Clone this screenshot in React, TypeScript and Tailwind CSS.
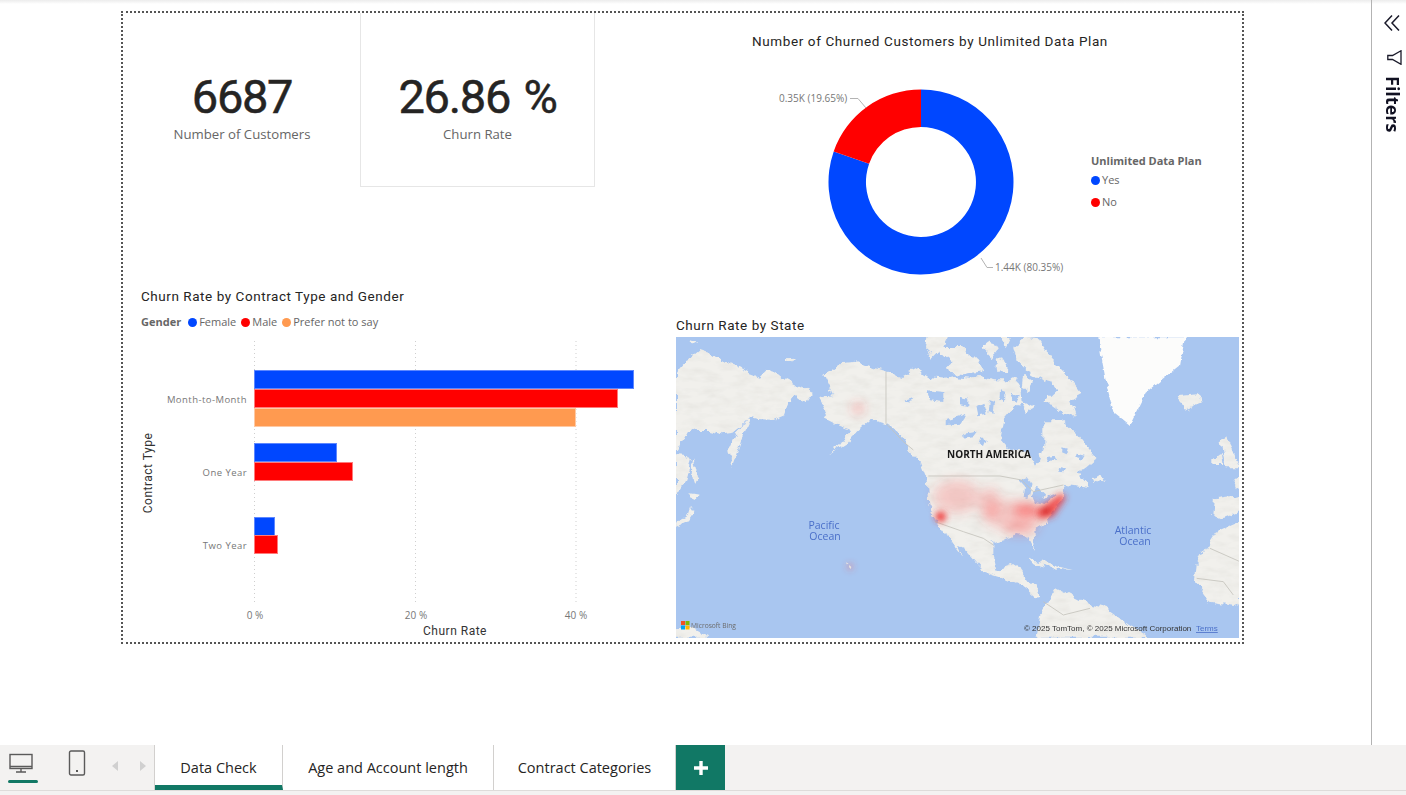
import React from "react";

const din = "font-['Roboto',sans-serif]";
const seg = "font-['Open_Sans',sans-serif]";

function Kpi({ value, label, boxed }: { value: string; label: string; boxed?: boolean }) {
  return (
    <div className={`flex h-[174px] flex-col items-center pt-[57px] ${boxed ? "w-[235px] border-x border-b border-[#e6e6e6]" : "w-[236px]"}`}>
      <div className={`${din} text-[47px] leading-[54px] tracking-[-1.3px] text-[#252423] [-webkit-text-stroke:0.5px_#252423] [word-spacing:3px]`}>{value}</div>
      <div className={`${seg} text-[13.2px] leading-[20px] text-[#666666]`}>{label}</div>
    </div>
  );
}

function Dot({ color }: { color: string }) {
  return <span className={`inline-block h-[9px] w-[9px] rounded-full ${color}`} />;
}

function BarChart() {
  const bars: [number, number, number, string, string][] = [
    [254, 370, 634, "#0047ff", "#5d87ff"],
    [254, 389, 618, "#ff0000", "#ff7a7a"],
    [254, 408, 576, "#ff9a50", "#ffc9a3"],
    [254, 443, 337, "#0047ff", "#5d87ff"],
    [254, 462, 353, "#ff0000", "#ff7a7a"],
    [254, 517, 275, "#0047ff", "#5d87ff"],
    [254, 535, 278, "#ff0000", "#ff7a7a"],
  ];
  return (
    <svg viewBox="124 335 544 305" className="h-[305px] w-[544px]">
      {[254.5, 415.5, 576].map((x) => (
        <line key={x} x1={x} x2={x} y1={341} y2={605} stroke="#cfcfcf" strokeWidth="1" strokeDasharray="1 3" />
      ))}
      {bars.map(([x, y, x2, c, b]) => (
        <rect key={`${x}${y}`} x={x + 0.5} y={y + 0.5} width={x2 - x - 1} height={18} fill={c} stroke={b} strokeWidth="1" />
      ))}
      <g fontFamily="Open Sans, sans-serif" fontSize="9.5" letterSpacing="0.45" fill="#777777" textAnchor="end">
        <text x="247" y="403">Month-to-Month</text>
        <text x="247" y="476">One Year</text>
        <text x="247" y="549">Two Year</text>
      </g>
      <g fontFamily="Open Sans, sans-serif" fontSize="10" fill="#777777" textAnchor="middle">
        <text x="255" y="619">0 %</text>
        <text x="416" y="619">20 %</text>
        <text x="576" y="619">40 %</text>
      </g>
      <text x="455" y="635" fontFamily="Roboto, sans-serif" fontSize="12" letterSpacing="0.5" fill="#333333" textAnchor="middle">Churn Rate</text>
      <text transform="translate(152 473) rotate(-90)" fontFamily="Roboto, sans-serif" fontSize="12" letterSpacing="0.5" fill="#333333" textAnchor="middle">Contract Type</text>
    </svg>
  );
}

function Donut() {
  return (
    <svg viewBox="668 60 400 225" className="h-[225px] w-[400px] shrink-0">
      <path d="M921 89.5 A92.5 92.5 0 1 1 833.7 151.4 L869.1 163.7 A55 55 0 1 0 921 127 Z" fill="#0047ff" />
      <path d="M921 89.5 A92.5 92.5 0 0 0 833.7 151.4 L869.1 163.7 A55 55 0 0 1 921 127 Z" fill="#ff0000" />
      <polyline points="850,98.5 858,98.5 866,108" fill="none" stroke="#b3b3b3" />
      <polyline points="993,267.5 987,267.5 981,258" fill="none" stroke="#b3b3b3" />
      <g fontFamily="Open Sans, sans-serif" fontSize="10" fill="#777777">
        <text x="779" y="102">0.35K (19.65%)</text>
        <text x="995" y="271">1.44K (80.35%)</text>
      </g>
    </svg>
  );
}

/* coastline pieces in a 3x space: (screen - (670,315)) * 3 */
const land = [
  "M18,170 L40,145 60,130 90,105 120,115 135,130 165,140 205,155 240,175 270,185 290,165 320,175 345,195 385,215 428,235 405,265 385,250 370,235 352,280 345,300 310,315 265,312 240,305 210,335 190,350 155,355 120,345 80,345 50,355 30,395 18,412 Z",
  "M240,305 L232,335 215,370 200,415 185,455 175,410 190,375 205,345 Z",
  "M18,418 L50,420 65,440 50,490 18,540 Z",
  "M70,430 L85,490 72,510 65,470 Z",
  "M62,535 L92,540 72,555 60,550 Z",
  "M60,575 L70,590 50,620 18,635 20,620 50,605 Z",
  "M345,130 L375,128 365,142 345,140 Z",
  "M60,72 L85,80 70,90 Z",
  "M18,940 L60,935 120,968 18,968 Z",
  /* Alaska, Canada, USA, Mexico */
  "M460,180 L510,145 560,140 610,160 645,166 690,186 740,161 780,186 830,191 850,186 900,191 930,186 970,196 1010,196 1030,186 1050,216 1055,261 1030,281 1000,316 990,366 1025,406 1075,411 1100,456 1120,396 1120,316 1170,316 1220,356 1280,430 1245,460 1220,475 1260,520 1190,510 1185,540 1160,575 1130,620 1090,650 1095,705 1075,665 1040,660 970,680 970,720 980,765 1040,745 1080,800 1115,845 1100,850 1060,815 1000,790 940,770 880,700 860,690 880,730 850,690 795,610 775,570 770,490 750,440 715,400 680,350 650,330 600,315 560,350 530,385 470,422 510,390 540,345 500,330 460,310 470,290 448,250 490,240 Z",
  /* Arctic islands */
  "M815,96 L870,96 920,136 940,171 880,181 840,176 830,156 845,141 815,116 Z",
  "M770,66 L835,66 820,96 785,131 765,96 Z",
  "M935,96 L960,76 980,106 965,126 Z",
  "M980,126 L1005,136 1015,166 985,171 Z",
  "M990,66 L1025,66 1010,96 Z",
  "M1030,96 L1060,71 1110,76 1150,136 1190,176 1235,236 1200,256 1215,301 1190,301 1145,266 1120,261 1160,226 1120,196 1070,166 1040,136 Z",
  "M1060,176 L1090,196 1070,231 1055,216 Z",
  "M1050,256 L1090,276 1070,291 Z",
  /* Newfoundland, Cuba, South America, Iceland, UK, Europe, Africa */
  "M1265,490 L1295,480 1305,505 1270,500 Z",
  "M1075,728 L1130,745 1205,765 1150,760 1090,745 Z",
  "M1100,968 L1110,900 1160,820 1240,860 1310,880 1380,930 1440,968 Z",
  "M1525,240 L1590,235 1595,265 1545,285 Z",
  "M1630,430 L1655,410 1660,450 1630,450 Z",
  "M1665,360 L1685,400 1710,460 1670,460 1655,380 Z",
  "M1710,480 L1690,490 1710,540 1635,550 1630,600 1655,612 1710,590 Z",
  "M1710,620 L1640,650 1580,740 1575,800 1620,860 1690,870 1710,860 Z",
];

const lakes = [
  "M770,226 l50,5 l0,30 l-40,-5 z",
  "M830,316 l60,-20 l-20,30 l-40,5 z",
  "M870,246 l25,5 l0,25 l-25,-5 z",
  "M920,276 l20,-10 l10,30 l-25,5 z",
  "M960,256 l15,5 l-5,35 l-14,-5 z",
  "M990,226 l14,5 l-2,30 l-14,-6 z",
  "M1025,236 l24,8 l-6,20 l-20,-10 z",
  "M880,356 l40,-6 l-10,14 l-30,4 z",
  "M930,366 l20,10 l-8,20 l-16,-10 z",
  "M1130,196 l16,4 l-4,18 l-14,-4 z",
  "M1175,396 l18,6 l-6,16 l-14,-6 z",
  "M1130,426 l24,-4 l4,12 l-24,4 z",
  "M1220,416 l24,6 l-8,12 l-20,-6 z",
  "M1170,456 l18,4 l-4,12 l-16,-2 z",
  "M700,256 l30,-10 l-6,14 z",
  "M1045,495 l25,-8 l15,20 l-10,45 l-14,-5 l4,-30 z",
  "M1085,540 l15,-25 l25,20 l-5,15 l30,-15 l10,5 l-40,30 l-25,-6 z",
];

function MapView() {
  return (
    <div className="h-[301px] w-[563px] overflow-hidden bg-[#a9c6f0]">
      <svg viewBox="676 337 563 301" className="block h-[301px] w-[563px]">
        <defs>
          <filter id="coast" x="-2%" y="-2%" width="104%" height="104%">
            <feTurbulence type="fractalNoise" baseFrequency="0.035" numOctaves="4" seed="4" result="n" />
            <feDisplacementMap in="SourceGraphic" in2="n" scale="26" xChannelSelector="R" yChannelSelector="G" result="d" />
            <feGaussianBlur in="d" stdDeviation="1.6" result="b" />
            <feTurbulence type="fractalNoise" baseFrequency="0.02 0.05" numOctaves="3" seed="9" />
            <feColorMatrix values="0 0 0 0 0.6  0 0 0 0 0.59  0 0 0 0 0.55  0.5 0 0 0 -0.2" result="t" />
            <feComposite in="t" in2="b" operator="in" result="tex" />
            <feMerge><feMergeNode in="b" /><feMergeNode in="tex" /></feMerge>
          </filter>
          <filter id="lake" x="-2%" y="-2%" width="104%" height="104%">
            <feTurbulence type="fractalNoise" baseFrequency="0.05" numOctaves="3" seed="7" result="n" />
            <feDisplacementMap in="SourceGraphic" in2="n" scale="16" xChannelSelector="R" yChannelSelector="G" result="d" />
            <feGaussianBlur in="d" stdDeviation="1.2" />
          </filter>
          <filter id="heat" x="-60%" y="-60%" width="220%" height="220%"><feGaussianBlur stdDeviation="16" /></filter>
          <filter id="heat2" x="-60%" y="-60%" width="220%" height="220%"><feGaussianBlur stdDeviation="9" /></filter>
        </defs>
        <g transform="translate(670 315) scale(0.33333)">
          <g filter="url(#coast)" fill="#f1f0ec">
            {land.map((d) => <path key={d} d={d} />)}
          </g>
          <path filter="url(#lake)" d="M1285,67 L1545,67 1530,150 1480,190 1430,230 1380,330 1330,290 1310,210 1295,130 Z" fill="#fcfcfb" />
          <g filter="url(#lake)" fill="#a9c6f0">
            {lakes.map((d) => <path key={d} d={d} />)}
          </g>
          <g fill="none" stroke="#c4c3bc" strokeWidth="2.5">
            <path d="M648,170 L648,325 700,380 730,405" />
            <path d="M775,483 L990,483 1055,495 1090,530 1180,510" />
            <path d="M795,620 L880,650 940,670 970,690" />
            <path d="M1120,860 L1180,900 1260,880 M1620,700 L1710,740 M1580,790 L1660,800 1690,840" />
          </g>
          <g filter="url(#heat)" fill="#ff4040">
            <ellipse cx="860" cy="545" rx="70" ry="50" opacity="0.22" />
            <ellipse cx="960" cy="565" rx="30" ry="45" opacity="0.28" />
            <ellipse cx="1030" cy="600" rx="90" ry="45" opacity="0.22" />
            <ellipse cx="1050" cy="640" rx="50" ry="18" opacity="0.3" />
            <ellipse cx="564" cy="280" rx="14" ry="12" opacity="0.55" />
            <ellipse cx="1070" cy="585" rx="40" ry="14" opacity="0.7" />
          </g>
          <g filter="url(#heat2)" fill="#f03030">
            <ellipse cx="812" cy="605" rx="16" ry="16" opacity="0.95" />
            <path d="M1095,590 L1170,535 1190,545 1150,605 1112,612 Z" opacity="0.8" />
            <ellipse cx="1128" cy="588" rx="14" ry="10" fill="#c82020" opacity="0.8" />
            <ellipse cx="540" cy="755" rx="9" ry="9" fill="#ff5050" opacity="0.45" />
          </g>
          <path d="M528,742 l8,4 l-6,2 z M538,750 l6,6 l-2,6 l-5,-6 z" fill="#e8e3e0" />
        </g>
        <g fontFamily="Open Sans, sans-serif" fill="#4a6fc9" fontSize="10.5" textAnchor="middle">
          <text x="824" y="529">Pacific</text>
          <text x="825" y="540">Ocean</text>
          <text x="1133" y="534">Atlantic</text>
          <text x="1135" y="545">Ocean</text>
        </g>
        <text x="989" y="458" fontFamily="Open Sans, sans-serif" fontSize="10" fontWeight="700" fill="#1a1a1a" textAnchor="middle">NORTH AMERICA</text>
        <g>
          <rect x="681" y="621" width="4" height="4" fill="#f25022" />
          <rect x="685.5" y="621" width="4" height="4" fill="#7fba00" />
          <rect x="681" y="625.5" width="4" height="4" fill="#00a4ef" />
          <rect x="685.5" y="625.5" width="4" height="4" fill="#ffb900" />
        </g>
        <text x="691" y="628" fontFamily="Open Sans, sans-serif" fontSize="6.7" fill="#6b6b6b">Microsoft Bing</text>
        <text x="1024" y="631" fontFamily="Liberation Sans, sans-serif" fontSize="8" fill="#333333">© 2025 TomTom, © 2025 Microsoft Corporation</text>
        <text x="1196" y="631" fontFamily="Liberation Sans, sans-serif" fontSize="8" fill="#4a6fc9" textDecoration="underline">Terms</text>
      </svg>
    </div>
  );
}

function Tab({ label, w, active }: { label: string; w: string; active?: boolean }) {
  return (
    <div className={`flex h-[45px] items-center justify-center border-r border-[#d2d0ce] bg-white ${w} ${seg} text-[14.5px] text-[#252423] ${active ? "border-b-[5px] border-b-[#117865] pt-[5px] font-medium" : ""}`}>
      {label}
    </div>
  );
}

export default function App() {
  return (
    <div className="flex h-[795px] w-[1406px] flex-col overflow-hidden bg-white">
      <div className="flex h-[745px]">
        <main className="w-[1371px] bg-gradient-to-b from-[#ececec] via-white via-[4px] to-white pl-[121px] pt-[11px]">
          <div className="flex h-[633px] w-[1123px] border-2 border-dotted border-[#555555]">
            <div className="w-[545px] shrink-0 pl-[1px]">
              <div className="flex">
                <Kpi value="6687" label="Number of Customers" />
                <Kpi value="26.86 %" label="Churn Rate" boxed />
              </div>
              <div className="mt-[100px]">
                <div className={`pl-[17px] ${din} text-[13.5px] leading-[18px] tracking-[0.55px] text-[#252423]`}>Churn Rate by Contract Type and Gender</div>
                <div className={`mb-[4px] mt-[8px] flex h-[18px] items-center pl-[17px] ${seg} text-[11px] text-[#666666]`}>
                  <span className="mr-[7px] font-bold">Gender</span>
                  <Dot color="bg-[#0047ff]" /><span className="ml-[2px] mr-[5px]">Female</span>
                  <Dot color="bg-[#ff0000]" /><span className="ml-[2px] mr-[5px]">Male</span>
                  <Dot color="bg-[#ff9a50]" /><span className="ml-[2px]">Prefer not to say</span>
                </div>
                <BarChart />
              </div>
            </div>
            <div className="w-[574px]">
              <div className={`mt-[18px] pr-[50px] text-center ${din} text-[13.5px] leading-[20px] tracking-[0.6px] text-[#252423]`}>Number of Churned Customers by Unlimited Data Plan</div>
              <div className="mt-[9px] flex">
                <Donut />
                <div className={`ml-[23px] pt-[91px] ${seg} text-[11px] text-[#666666]`}>
                  <div className="text-[11px] font-bold leading-[20px]">Unlimited Data Plan</div>
                  <div className="flex h-[19px] items-center gap-[2px]"><Dot color="bg-[#0047ff]" />Yes</div>
                  <div className="mt-[3px] flex h-[19px] items-center gap-[2px]"><Dot color="bg-[#ff0000]" />No</div>
                </div>
              </div>
              <div className={`mt-[31px] pl-[8px] ${din} text-[13.5px] leading-[18px] tracking-[0.55px] text-[#252423]`}>Churn Rate by State</div>
              <div className="ml-[8px] mt-[3px]"><MapView /></div>
            </div>
          </div>
        </main>
        <aside className="flex w-[35px] flex-col items-center border-l border-[#b3b3b3] bg-gradient-to-b from-[#ececec] via-white via-[4px] to-white pl-[6px] pt-[15px]">
          <svg viewBox="0 0 16 16" className="h-[16px] w-[16px]" fill="none" stroke="#1a1a2a" strokeWidth="1.5">
            <path d="M8 .5 L1 8 L8 15.5 M15 .5 L8 8 L15 15.5" />
          </svg>
          <svg viewBox="0 0 15 15" className="ml-[5px] mt-[19px] h-[15px] w-[15px]" fill="none" stroke="#1a1a2a" strokeWidth="1.3">
            <path d="M14 .7 L5.5 5.5 H.8 V9.5 H5.5 L14 14.3 Z" />
          </svg>
          <div className={`ml-[2px] mt-[11px] ${seg} text-[18px] font-bold leading-[20px] text-[#111122] [writing-mode:vertical-rl]`}>Filters</div>
        </aside>
      </div>
      <div className="flex h-[45px] bg-[#f3f2f1]">
        <div className="flex w-[155px] shrink-0 border-r border-[#d2d0ce]">
          <div className="ml-[8px] flex w-[30px] flex-col items-center">
            <svg viewBox="0 0 26 22" className="mr-[4px] mt-[8px] h-[22px] w-[26px]" fill="none" stroke="#5a5a5a" strokeWidth="1.4">
              <rect x="2" y="1.5" width="22" height="14" />
              <path d="M2 13.5 H24 M13 15.5 V19 M8 19 H18" />
            </svg>
            <div className="mt-[5px] h-[3px] w-[30px] rounded-sm bg-[#117865]" />
          </div>
          <svg viewBox="0 0 18 26" className="ml-[30px] mt-[5px] h-[26px] w-[18px]" fill="none" stroke="#5a5a5a" strokeWidth="1.4">
            <rect x="1.5" y="1" width="15" height="24" rx="1.5" />
            <path d="M8 21 H10" stroke="#252423" strokeWidth="1.6" />
          </svg>
          <svg viewBox="0 0 8 12" className="ml-[25px] mt-[15px] h-[12px] w-[8px]" fill="#d0d0d0"><path d="M7 1 L1 6 L7 11 Z" /></svg>
          <svg viewBox="0 0 8 12" className="ml-[20px] mt-[15px] h-[12px] w-[8px]" fill="#d0d0d0"><path d="M1 1 L7 6 L1 11 Z" /></svg>
        </div>
        <Tab label="Data Check" w="w-[128px]" active />
        <Tab label="Age and Account length" w="w-[211px]" />
        <Tab label="Contract Categories" w="w-[182px]" />
        <div className="flex h-[45px] w-[49px] items-center justify-center bg-[#117865]">
          <svg viewBox="0 0 14 14" className="h-[14px] w-[14px]" stroke="#ffffff" strokeWidth="3.4"><path d="M7 0 V14 M0 7 H14" /></svg>
        </div>
      </div>
      <div className="h-[5px] border-t border-[#dedcda] bg-[#f3f2f1]" />
    </div>
  );
}
